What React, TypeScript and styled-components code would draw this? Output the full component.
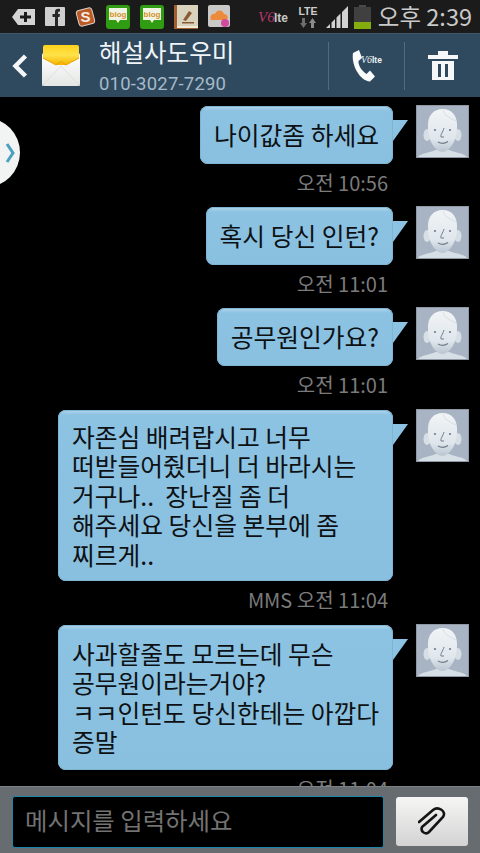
import React from 'react';
import styled, { createGlobalStyle } from 'styled-components';

const GlobalStyle = createGlobalStyle`
  html, body {
    margin: 0;
    padding: 0;
    background: #000;
  }
  * {
    box-sizing: border-box;
  }
`;

const Page = styled.div`
  width: 480px;
  height: 853px;
  display: flex;
  flex-direction: column;
  overflow: hidden;
  background: #000;
  font-family: "Noto Sans CJK KR", "Noto Sans", sans-serif;
`;

const StatusBar = styled.div`
  height: 33px;
  flex: none;
  display: flex;
  align-items: center;
  justify-content: space-between;
  padding: 0 8px 0 12px;
  background: #1b1b1b;
`;

const StatusGroup = styled.div<{ $gap: number }>`
  display: flex;
  align-items: center;
  gap: ${props => props.$gap}px;
`;

const Clock = styled.div`
  font-size: 23.5px;
  line-height: 33px;
  color: #c9c9c9;
  white-space: nowrap;
  margin-left: 1px;
`;

const Header = styled.div`
  height: 64px;
  flex: none;
  display: flex;
  align-items: center;
  padding-left: 12px;
  background: #2f4a5f;
  border-top: 1px solid #41586a;
`;

const EnvelopeSlot = styled.div`
  margin-left: 14px;
  width: 38px;
  height: 41px;
  flex: none;
`;

const Contact = styled.div`
  margin-left: 19px;
  flex: 1;
  display: flex;
  flex-direction: column;
  gap: 6px;
  margin-top: 3px;
  padding-bottom: 3px;
`;

const ContactName = styled.div`
  font-size: 24.5px;
  line-height: 30px;
  color: #f1f4f6;
`;

const ContactNumber = styled.div`
  font-family: "Roboto", sans-serif;
  font-size: 18.5px;
  line-height: 22px;
  letter-spacing: 0.2px;
  color: #a6bac9;
`;

const HeaderAction = styled.div`
  width: 76px;
  height: 48px;
  flex: none;
  display: flex;
  align-items: center;
  justify-content: center;
  border-left: 1px solid #56697a;
`;

const Thread = styled.div`
  flex: 1;
  min-height: 0;
  position: relative;
  overflow: hidden;
  padding-top: 8px;
  display: flex;
  flex-direction: column;
`;

const DrawerHandle = styled.div`
  position: absolute;
  left: -48px;
  top: 21px;
  width: 68px;
  height: 69px;
  border-radius: 50%;
  background: #f2f4f3;
  display: flex;
  align-items: center;
  justify-content: flex-end;
  padding-right: 5px;
`;

const Entry = styled.div`
  display: flex;
  justify-content: flex-end;
  align-items: flex-start;
  padding-right: 11px;
  gap: 23px;
`;

const Message = styled.div<{ $gapAfter: number }>`
  display: flex;
  flex-direction: column;
  align-items: flex-end;
  flex: none;
  margin-bottom: ${props => props.$gapAfter}px;
`;

const Bubble = styled.div<{ $wide?: boolean; $padY: number }>`
  position: relative;
  width: ${props => (props.$wide ? '335px' : 'auto')};
  margin-top: 1px;
  padding: ${props => props.$padY}px 14px;
  background: linear-gradient(#b2d7eb 0, #8cc2e2 5px, #8ac0df 100%);
  border-radius: 8px;
  box-shadow: inset 0 0 0 1px #7fb4d3;
  font-size: 24.75px;
  line-height: 29.5px;
  color: #0d1114;
  white-space: pre;

  &::after {
    content: '';
    position: absolute;
    left: 100%;
    top: 14px;
    width: 15px;
    height: 21px;
    background: #8cc2e2;
    clip-path: polygon(0 0, 100% 0, 0 100%);
  }
`;

const Stamp = styled.div`
  margin-top: 6px;
  margin-right: 92px;
  font-size: 20px;
  line-height: 26px;
  color: #7b7b7b;
`;

const AvatarFrame = styled.div`
  width: 53px;
  height: 53px;
  flex: none;
  border: 1px solid #8f98a3;
  background: #a8b4c3;
`;

const Composer = styled.div`
  height: 67px;
  flex: none;
  display: flex;
  align-items: flex-start;
  gap: 12px;
  padding: 9px 12px 0;
  background: #666c70;
  border-top: 1px solid #7b8286;
`;

const MessageField = styled.div`
  width: 372px;
  height: 52px;
  display: flex;
  align-items: center;
  padding: 0 0 5px 12px;
  background: #000;
  border: 1px solid #1d86ad;
  border-radius: 3px;
  font-size: 24.4px;
  color: #737373;
`;

const AttachButton = styled.div`
  width: 72px;
  height: 49px;
  margin-top: 1px;
  display: flex;
  align-items: center;
  justify-content: center;
  border-radius: 3px;
  background: linear-gradient(#f6f6f5, #d2d3d2);
`;

const BackIcon = () => (
  <svg width="16" height="24" viewBox="0 0 16 24">
    <path d="M13.500 2 L3.500 12 L13.500 22" fill="none" stroke="#f4f6f7" strokeWidth="4.500" />
  </svg>
);

const EnvelopeIcon = () => (
  <svg width="38" height="41" viewBox="0 0 38 41">
    <defs>
      <linearGradient id="flapFill" x1="0" y1="0" x2="0" y2="1">
        <stop offset="0" stopColor="#ffd21a" />
        <stop offset="0.5" stopColor="#ffe24a" />
        <stop offset="1" stopColor="#f4b400" />
      </linearGradient>
      <linearGradient id="paperFill" x1="0" y1="0" x2="0" y2="1">
        <stop offset="0" stopColor="#ffffff" />
        <stop offset="1" stopColor="#e4e6e4" />
      </linearGradient>
    </defs>
    <rect x="0" y="8" width="38" height="33" rx="2" fill="url(#paperFill)" />
    <path d="M0 41 L19 21 L38 41" fill="none" stroke="#d9dcda" strokeWidth="0.800" />
    <path d="M1 2 Q1 0 3 0 L35 0 Q37 0 37 2 L37 13 L24 20 L14 20 L1 13 Z" fill="url(#flapFill)" />
    <path d="M1 13 L14 20 L19 16.500 L24 20 L37 13" fill="none" stroke="#e9a400" strokeWidth="1" />
  </svg>
);

const CallIcon = () => (
  <svg width="32" height="32" viewBox="0 0 32 32">
    <path
      d="M2 3 L8 0 L11 8 L7.500 11 C7 16 12 22 15.500 24 L19 20.500 L24 26.500 L19 31.500 C9 31 0 15 2 3 Z"
      fill="#fbfcfc"
    />
    <text x="10" y="12.500" fontFamily="Liberation Serif, serif" fontStyle="italic" fontSize="10" fill="#f2f4f5">
      V6
    </text>
    <text x="21" y="12.500" fontFamily="Liberation Sans, sans-serif" fontSize="8.500" fontWeight="700" fill="#f2f4f5">
      lte
    </text>
  </svg>
);

const TrashIcon = () => (
  <svg width="30" height="31" viewBox="0 0 30 31">
    <path d="M0 5 H10 V1 H20 V5 H30 V9 H0 Z" fill="#f6f7f8" />
    <path d="M4 11 H26 V30 H4 Z M10 14 V27 H13 V14 Z M17 14 V27 H20 V14 Z" fill="#f6f7f8" fillRule="evenodd" />
  </svg>
);

const ChevronIcon = () => (
  <svg width="10" height="20" viewBox="0 0 10 20">
    <path d="M2 1 L8 10 L2 19" fill="none" stroke="#4ba0c0" strokeWidth="3" />
  </svg>
);

const ClipIcon = () => (
  <svg width="28" height="29" viewBox="0 0 28 29">
    <path
      d="M1 15 L15 3 C20 -1 29 4 25 10 L11 25 C8 28 2 25 4 20 L18 8"
      fill="none"
      stroke="#141414"
      strokeWidth="2.600"
      strokeLinecap="round"
    />
  </svg>
);

const FaceIcon = () => (
  <svg width="51" height="51" viewBox="0 0 51 51">
    <defs>
      <linearGradient id="faceFill" x1="0" y1="0" x2="0" y2="1">
        <stop offset="0" stopColor="#f1f4f6" />
        <stop offset="0.7" stopColor="#dfe6ec" />
        <stop offset="1" stopColor="#b9c5d1" />
      </linearGradient>
    </defs>
    <path d="M1 51 C4 47 12 47 19 44 L32 44 C39 47 47 47 50 51 Z" fill="#d7dfe6" />
    <ellipse cx="10" cy="29" rx="3.500" ry="6" fill="#d7dfe6" />
    <ellipse cx="41" cy="29" rx="3.500" ry="6" fill="#d7dfe6" />
    <path d="M11 22 C10 9 17 3 25.500 3 C35 3 41 10 40 22 C40 34 33 46 25.500 46 C18 46 11 34 11 22 Z" fill="url(#faceFill)" />
    <path d="M26 4 C27 9 31 11 39 15" fill="none" stroke="#cfd8e0" strokeWidth="0.800" />
    <circle cx="18" cy="24" r="1.100" fill="#6f7d8a" />
    <circle cx="33" cy="24" r="1.100" fill="#6f7d8a" />
    <path d="M27 22 C26 26 23 29 24 31 L27 31" fill="none" stroke="#6f7d8a" strokeWidth="1" />
    <path d="M21 36 Q26 39 31 35.500" fill="none" stroke="#6f7d8a" strokeWidth="1.200" />
  </svg>
);

const TagPlusIcon = () => (
  <svg width="23" height="18" viewBox="0 0 23 18">
    <path d="M0 9 L6 1 H23 V17 H6 Z" fill="#d4d4d4" />
    <path d="M12 4 H15 V7.500 H19 V10.500 H15 V14 H12 V10.500 H8 V7.500 H12 Z" fill="#1b1b1b" />
  </svg>
);

const FacebookIcon = () => (
  <svg width="20" height="19" viewBox="0 0 20 19">
    <rect width="20" height="19" rx="1" fill="#cfcfcf" />
    <path d="M10 19 V10 H7.500 V7 H10 V5 C10 2 12 1.500 15 2 V4.500 C13 4.300 13 5 13 7 H15 L14.500 10 H13 V19 Z" fill="#262626" />
  </svg>
);

const SIcon = () => (
  <svg width="21" height="22" viewBox="0 0 21 22">
    <rect x="2.500" y="3" width="16" height="16" rx="3" transform="rotate(-15 10.500 11)" fill="#bd5a25" stroke="#d9d2c8" strokeWidth="1" />
    <text x="10.500" y="16" textAnchor="middle" fontFamily="Liberation Sans, sans-serif" fontSize="15" fontWeight="700" fill="#f4efe7">S</text>
  </svg>
);

const BlogIcon = () => (
  <svg width="24" height="24" viewBox="0 0 24 24">
    <rect width="24" height="24" rx="3" fill="#2f9c12" />
    <path d="M3 3 H21 V15 H14 L12 18 L10 15 H3 Z" fill="#f0f3e4" />
    <text x="12" y="12" textAnchor="middle" fontFamily="Liberation Sans, sans-serif" fontSize="8" fontWeight="700" fill="#d2902a">blog</text>
  </svg>
);

const BookIcon = () => (
  <svg width="24" height="24" viewBox="0 0 24 24">
    <rect width="24" height="24" fill="#a35f30" />
    <rect x="3" y="0" width="21" height="21" fill="#d9d2bd" />
    <rect x="3" y="21" width="21" height="2" fill="#f0ead8" />
    <path d="M9 15 L15 6 L18 8 L12 16 Z" fill="#8a5a32" />
    <rect x="8" y="17" width="12" height="1.500" fill="#8a5a32" />
  </svg>
);

const CloudIcon = () => (
  <svg width="22" height="24" viewBox="0 0 22 24">
    <rect width="22" height="22" rx="2" fill="#c9c9c7" />
    <path d="M3 15 C1 11 5 8 7 9 C9 4 15 5 16 9 C20 9 21 14 18 15 Z" fill="#ee8a3c" />
    <circle cx="17" cy="18" r="4" fill="#d24aa0" />
  </svg>
);

const VolteMark = () => (
  <svg width="32" height="16" viewBox="0 0 32 16">
    <text x="0" y="13" fontFamily="Liberation Serif, serif" fontStyle="italic" fontSize="15" fill="#b5366a">V6</text>
    <text x="16" y="13" fontFamily="Liberation Sans, sans-serif" fontSize="12" fontWeight="700" fill="#c9c9c9">lte</text>
  </svg>
);

const LteMark = () => (
  <svg width="24" height="24" viewBox="0 0 24 24">
    <text x="12" y="10" textAnchor="middle" fontFamily="Liberation Sans, sans-serif" fontSize="10.500" fontWeight="700" fill="#cdcdcd">LTE</text>
    <path d="M6 13 H9 V18 H11 L7.500 23 L4 18 H6 Z" fill="#6d6d6d" />
    <path d="M15 23 H18 V18 H20 L16.500 13 L13 18 H15 Z" fill="#8b8b8b" />
  </svg>
);

const SignalIcon = () => (
  <svg width="22" height="22" viewBox="0 0 22 22">
    <path d="M0 22 L4 18 V22 Z M5.500 22 V16.500 L9 13 V22 Z M10.500 22 V11.500 L14.500 7.500 V22 Z M16 22 V6 L22 0 V22 Z" fill="#d2d2d2" />
  </svg>
);

const BatteryIcon = () => (
  <svg width="17" height="24" viewBox="0 0 17 24">
    <rect x="5" y="0" width="7" height="2" fill="#4a4a4a" />
    <rect x="0" y="2" width="17" height="22" fill="#404040" />
    <rect x="0" y="17" width="17" height="7" fill="#84ad0e" />
  </svg>
);

interface ThreadEntry {
  text: string;
  stamp: string;
  wide?: boolean;
  padY: number;
  gapAfter: number;
}

const entries: ThreadEntry[] = [
  { text: '나이값좀 하세요', stamp: '오전 10:56', padY: 14.25, gapAfter: 10 },
  { text: '혹시 당신 인턴?', stamp: '오전 11:01', padY: 14.25, gapAfter: 10 },
  { text: '공무원인가요?', stamp: '오전 11:01', padY: 14.25, gapAfter: 11 },
  {
    text: '자존심 배려랍시고 너무\n떠받들어줬더니 더 바라시는\n거구나..  장난질 좀 더\n해주세요 당신을 본부에 좀\n찌르게..',
    stamp: 'MMS 오전 11:04',
    wide: true,
    padY: 11.75,
    gapAfter: 11,
  },
  {
    text: '사과할줄도 모르는데 무슨\n공무원이라는거야?\nㅋㅋ인턴도 당신한테는 아깝다\n증말',
    stamp: '오전 11:04',
    wide: true,
    padY: 13.5,
    gapAfter: 0,
  },
];

const App: React.FC = () => {
  return (
    <Page>
      <GlobalStyle />
      <StatusBar>
        <StatusGroup $gap={10}>
          <TagPlusIcon />
          <FacebookIcon />
          <SIcon />
          <BlogIcon />
          <BlogIcon />
          <BookIcon />
          <CloudIcon />
        </StatusGroup>
        <StatusGroup $gap={6}>
          <VolteMark />
          <LteMark />
          <SignalIcon />
          <BatteryIcon />
          <Clock>오후 2:39</Clock>
        </StatusGroup>
      </StatusBar>

      <Header>
        <BackIcon />
        <EnvelopeSlot>
          <EnvelopeIcon />
        </EnvelopeSlot>
        <Contact>
          <ContactName>해설사도우미</ContactName>
          <ContactNumber>010-3027-7290</ContactNumber>
        </Contact>
        <HeaderAction>
          <CallIcon />
        </HeaderAction>
        <HeaderAction>
          <TrashIcon />
        </HeaderAction>
      </Header>

      <Thread>
        {entries.map(entry => (
          <Message key={entry.text} $gapAfter={entry.gapAfter}>
            <Entry>
              <Bubble $wide={entry.wide} $padY={entry.padY}>
                {entry.text}
              </Bubble>
              <AvatarFrame>
                <FaceIcon />
              </AvatarFrame>
            </Entry>
            <Stamp>{entry.stamp}</Stamp>
          </Message>
        ))}
        <DrawerHandle>
          <ChevronIcon />
        </DrawerHandle>
      </Thread>

      <Composer>
        <MessageField>메시지를 입력하세요</MessageField>
        <AttachButton>
          <ClipIcon />
        </AttachButton>
      </Composer>
    </Page>
  );
};

export default App;
